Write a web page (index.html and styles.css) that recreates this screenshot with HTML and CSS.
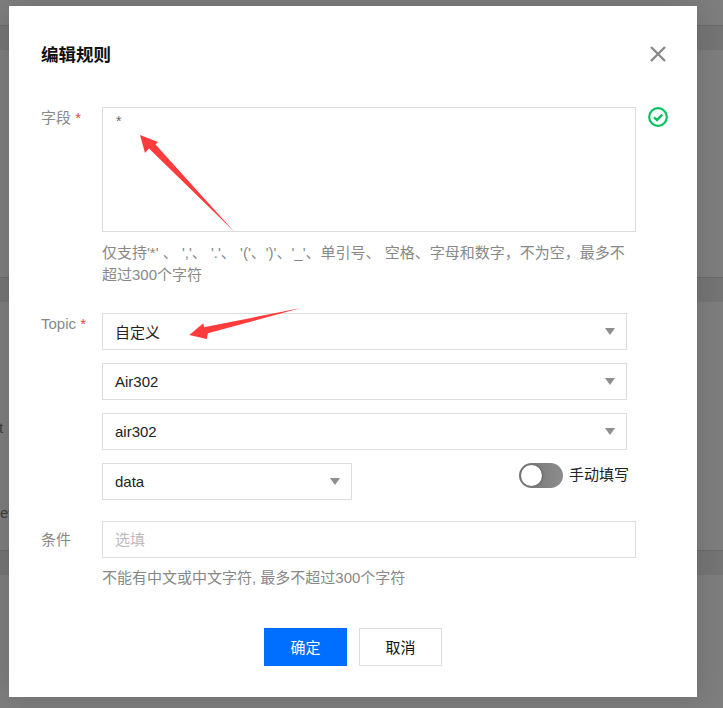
FILE: index.html
```html
<!DOCTYPE html>
<html lang="zh-CN">
<head>
    <meta charset="UTF-8">
    <meta name="viewport" content="width=device-width, initial-scale=1.0">
    <title>编辑规则</title>
    <link rel="stylesheet" href="styles.css">
</head>
<body>

<!-- dimmed page behind the dialog -->
<div class="backdrop">
    <div class="bg-top"></div>
    <div class="bg-band"></div>
    <div class="bg-card bg-card-a"></div>
    <div class="bg-band"></div>
    <div class="bg-card bg-card-b">
        <span class="bg-text bg-text-t">t</span>
        <span class="bg-text bg-text-ev">ev</span>
    </div>
    <div class="bg-band"></div>
    <div class="bg-rest"></div>
</div>

<div class="dialog">
    <div class="dialog-head">
        <h2 class="dialog-title">编辑规则</h2>
        <svg class="close-icon" width="18" height="18" viewBox="0 0 18 18">
            <path d="M2 2 L16 16 M16 2 L2 16" stroke="#888" stroke-width="2.4" fill="none"/>
        </svg>
    </div>

    <div class="form-row row-field">
        <label class="form-label">字段 <em>*</em></label>
        <div class="form-control">
            <textarea class="text-area" readonly>*</textarea>
            <p class="hint hint-field">仅支持'*' 、 ','、 '.'、 '('、')'、'_'、单引号、 空格、字母和数字，不为空，最多不超过300个字符</p>
        </div>
        <svg class="ok-icon" width="20" height="20" viewBox="0 0 20 20">
            <circle cx="10" cy="10" r="8.8" stroke="#07c160" stroke-width="2.2" fill="none"/>
            <path d="M6 10.3 L9 13 L14.2 7.6" stroke="#07c160" stroke-width="2.4" fill="none"/>
        </svg>
    </div>

    <div class="form-row row-topic">
        <label class="form-label">Topic <em>*</em></label>
        <div class="form-control topic-list">
            <div class="select select-wide"><span>自定义</span><i class="caret"></i></div>
            <div class="select select-wide"><span>Air302</span><i class="caret"></i></div>
            <div class="select select-wide"><span>air302</span><i class="caret"></i></div>
            <div class="topic-last">
                <div class="select select-short"><span>data</span><i class="caret"></i></div>
                <div class="switch-wrap">
                    <span class="switch"><i class="switch-knob"></i></span>
                    <span class="switch-text">手动填写</span>
                </div>
            </div>
        </div>
    </div>

    <div class="form-row row-cond">
        <label class="form-label label-cond">条件</label>
        <div class="form-control">
            <input class="text-input" type="text" placeholder="选填">
            <p class="hint hint-cond">不能有中文或中文字符, 最多不超过300个字符</p>
        </div>
    </div>

    <div class="dialog-foot">
        <button class="btn btn-primary">确定</button>
        <button class="btn">取消</button>
    </div>

    <!-- red annotation arrows drawn over the form -->
    <svg class="arrows" width="688" height="691" viewBox="9 6 688 691">
        <polygon fill="#ff3b3b" points="140,135 158,142 155.5,144.5 234.5,232 149,148.5 145,153"/>
        <polygon fill="#ff3b3b" points="189.3,335 203.3,323.3 204,327.3 301,308 208,333.3 206.7,339"/>
    </svg>
</div>

</body>
</html>
```

FILE: styles.css
```css
* {
    box-sizing: border-box;
}
html, body {
    margin: 0;
    height: 100%;
}
body {
    position: relative;
    width: 723px;
    height: 708px;
    overflow: hidden;
    font-family: "Liberation Sans", "Noto Sans CJK SC", sans-serif;
    font-size: 15px;
    color: #222;
}

/* page behind the dialog */
.backdrop {
    display: flex;
    flex-direction: column;
    height: 708px;
    background-color: #7e7e7e;
}
.bg-top {
    height: 25px;
}
.bg-band {
    height: 25px;
    background-color: #757575;
    border-top: 1px solid #6a6a6a;
}
.bg-card-a {
    height: 227px;
}
.bg-card-b {
    display: flex;
    flex-direction: column;
    height: 248px;
    padding-top: 116px;
}
.bg-rest {
    flex: 1;
}
.bg-text {
    line-height: 20px;
    color: #3c3c3c;
    font-size: 15px;
}
.bg-text-t {
    margin-left: -1px;
}
.bg-text-ev {
    margin-top: 65px;
}

/* dialog */
.dialog {
    position: absolute;
    left: 9px;
    top: 6px;
    width: 688px;
    height: 691px;
    padding: 36px 0 0 32px;
    background-color: #fff;
    box-shadow: 0 0 30px rgba(0, 0, 0, 0.14);
}
.dialog-head {
    display: flex;
    justify-content: space-between;
    align-items: center;
    height: 24px;
    padding-right: 30px;
}
.dialog-title {
    margin: 0 0 2px;
    font-size: 17.5px;
    font-weight: bold;
    color: #111;
}
.form-row {
    display: flex;
    align-items: flex-start;
}
.row-field {
    margin-top: 41px;
}
.row-topic {
    margin-top: 27px;
}
.row-cond {
    margin-top: 21px;
}
.form-label {
    width: 61px;
    line-height: 21px;
    color: #888;
}
.form-label em {
    font-style: normal;
    color: #e54545;
}
.label-cond {
    padding-top: 8px;
}
.form-control {
    width: 534px;
}
.ok-icon {
    margin-left: 12px;
}

.text-area {
    display: block;
    width: 534px;
    height: 125px;
    padding: 5px 13px;
    border: 1px solid #ddd;
    outline: none;
    resize: none;
    font-family: inherit;
    font-size: 14px;
    color: #666;
}
.hint {
    margin: 0;
    line-height: 22px;
    color: #888;
}
.hint-field {
    margin-top: 10px;
}
.hint-cond {
    margin-top: 9px;
}

.topic-list {
    display: flex;
    flex-direction: column;
    gap: 13px;
}
.select {
    display: flex;
    justify-content: space-between;
    align-items: center;
    height: 37px;
    padding: 0 11px 0 12px;
    border: 1px solid #ddd;
    color: #222;
}
.select-wide {
    width: 525px;
}
.select-short {
    width: 250px;
}
.caret {
    width: 0;
    height: 0;
    border-left: 5px solid transparent;
    border-right: 5px solid transparent;
    border-top: 7px solid #8e8e8e;
}
.topic-last {
    display: flex;
    justify-content: space-between;
    align-items: flex-start;
    width: 527px;
}
.switch-wrap {
    display: flex;
    align-items: flex-start;
    gap: 6px;
}
.switch {
    display: flex;
    align-items: center;
    width: 44px;
    height: 25px;
    padding-left: 2px;
    border-radius: 13px;
    background-image: linear-gradient(90deg, #747474, #8c8c8c);
}
.switch-knob {
    width: 21px;
    height: 21px;
    border-radius: 50%;
    background-color: #fff;
    box-shadow: 1px 0 2px rgba(0, 0, 0, 0.25);
}
.switch-text {
    line-height: 23px;
    color: #222;
}

.text-input {
    display: block;
    width: 534px;
    height: 37px;
    padding: 0 12px;
    border: 1px solid #ddd;
    outline: none;
    font-family: inherit;
    font-size: 15px;
}
.text-input::placeholder {
    color: #bbb;
}

.dialog-foot {
    display: flex;
    gap: 12px;
    margin-top: 39px;
    padding-left: 223px;
}
.btn {
    width: 83px;
    height: 38px;
    padding: 0 0 2px;
    border: 1px solid #ddd;
    background-color: #fff;
    font-family: inherit;
    font-size: 15px;
    color: #111;
}
.btn-primary {
    border: none;
    background-color: #006eff;
    color: #fff;
}

.arrows {
    position: absolute;
    left: 0;
    top: 0;
    pointer-events: none;
}
```
